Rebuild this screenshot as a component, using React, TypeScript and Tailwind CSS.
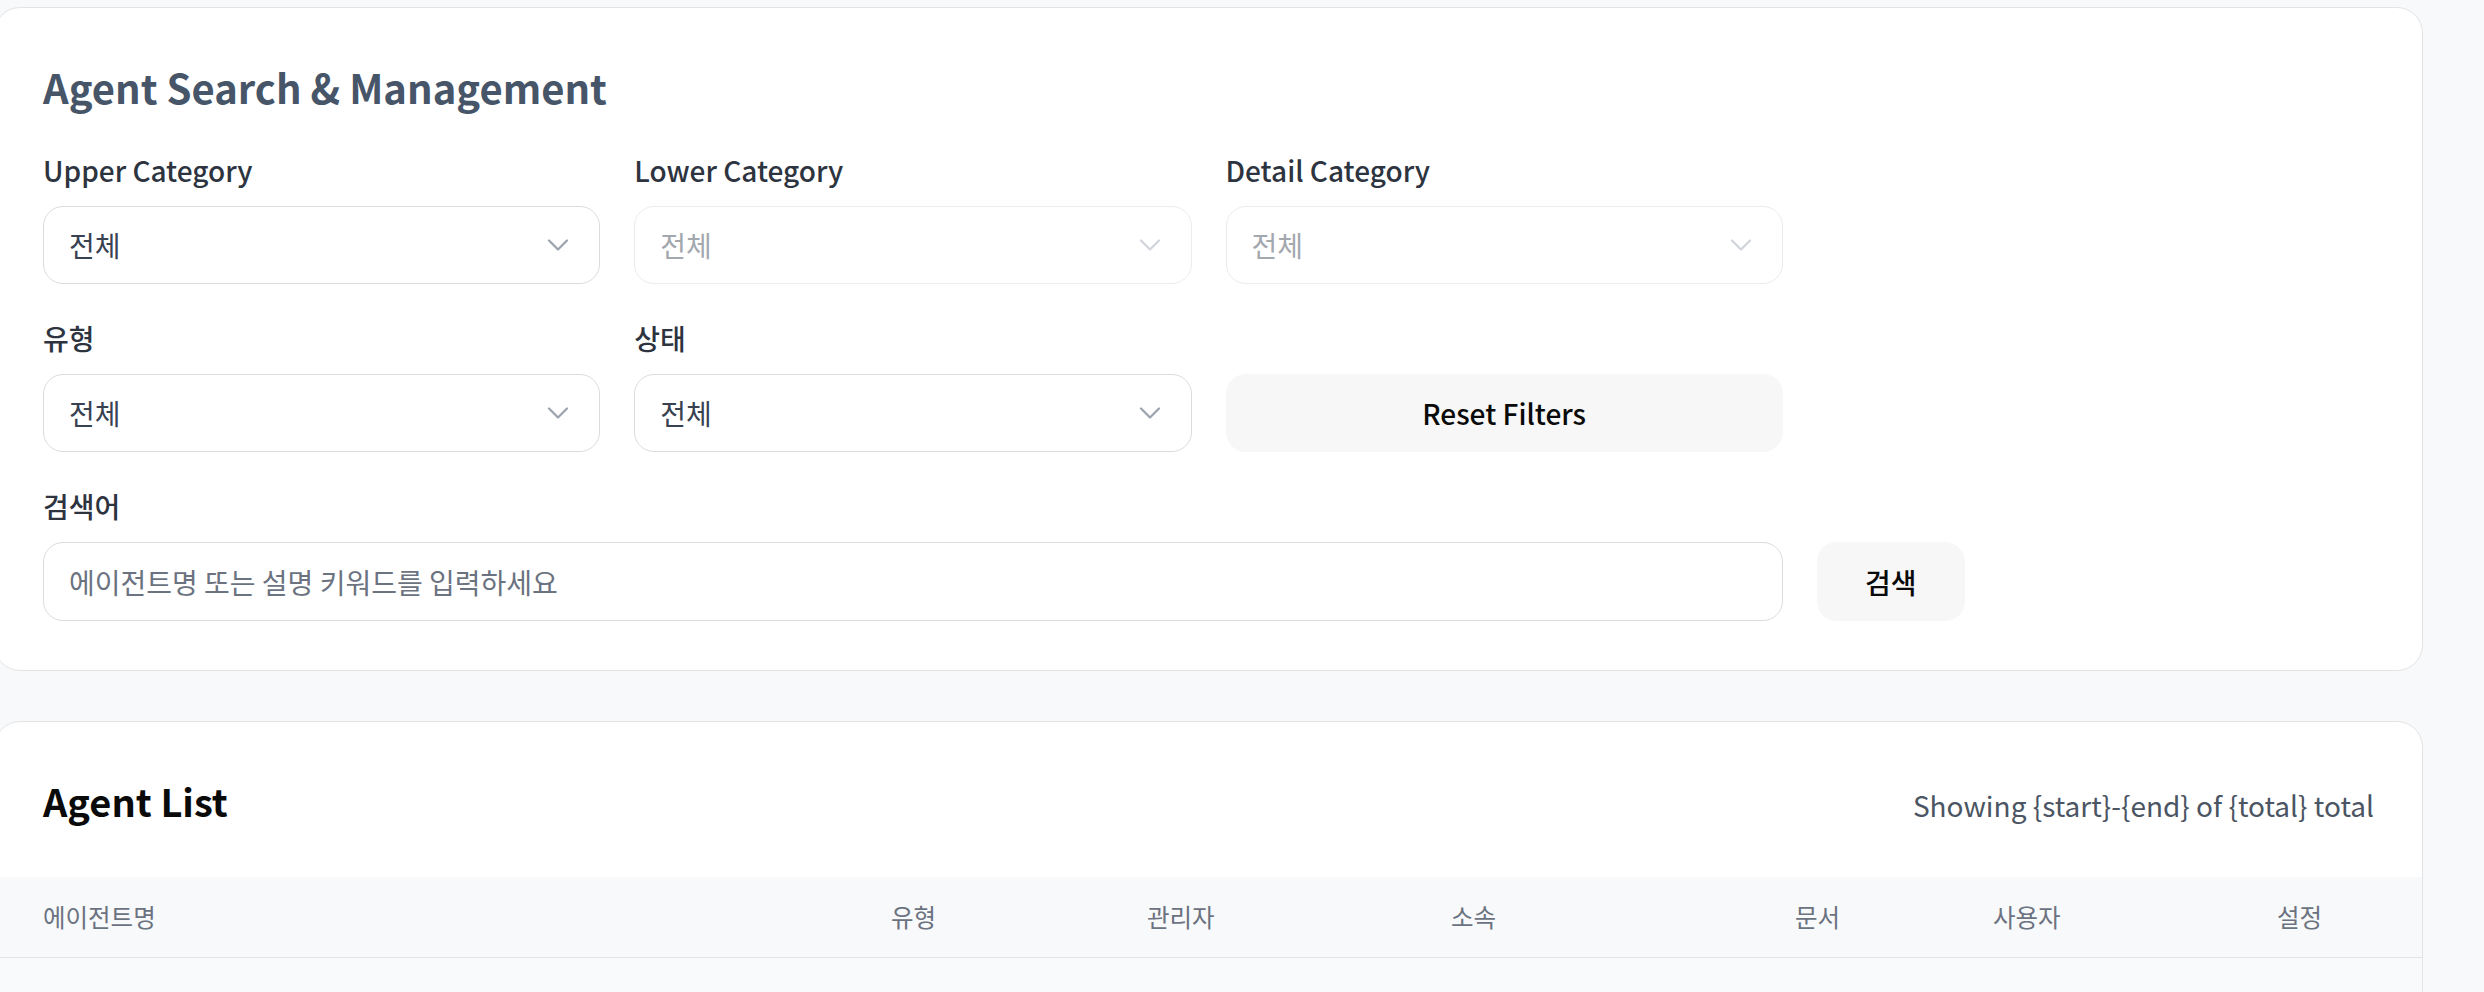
import { ChevronDown } from "lucide-react";

function SelectField({
  label,
  disabled = false,
}: {
  label: string;
  disabled?: boolean;
}) {
  return (
    <div className="flex flex-col">
      <label className="h-[42px] text-[28px] leading-[42px] font-medium text-[#2d3440] mb-[15px]">
        {label}
      </label>
      <button
        type="button"
        disabled={disabled}
        className={
          disabled
            ? "flex h-[78px] items-center justify-between rounded-[20px] border border-[#ececec] bg-white pl-[25px] pr-[23px] text-left text-[28px] text-[#a3a7ae]"
            : "flex h-[78px] items-center justify-between rounded-[20px] border border-[#dcdcdc] bg-white pl-[25px] pr-[23px] text-left text-[28px] text-[#374151]"
        }
      >
        <span>전체</span>
        <ChevronDown
          size={36}
          strokeWidth={1.5}
          className={disabled ? "text-[#d1d5db]" : "text-[#9ca3af]"}
        />
      </button>
    </div>
  );
}

export default function App() {
  return (
    <div className="min-h-screen bg-[#f8f9fa] pt-[7px] pr-[61px] font-['Noto_Sans_CJK_KR','Noto_Sans',sans-serif]">
      <div className="-ml-[6px] flex flex-col gap-[50px]">
        <section className="rounded-[26px] border border-[#e3e4e6] bg-white px-[48px] pt-[51px] pb-[49px]">
          <h2 className="mb-[34px] text-[40px] leading-[56px] font-bold text-[#475569]">
            Agent Search &amp; Management
          </h2>
          <div className="grid grid-cols-4 gap-x-[34px] gap-y-[33px]">
            <SelectField label="Upper Category" />
            <SelectField label="Lower Category" disabled />
            <SelectField label="Detail Category" disabled />
            <div />
            <SelectField label="유형" />
            <SelectField label="상태" />
            <div className="flex flex-col justify-end">
              <button
                type="button"
                className="h-[78px] rounded-[20px] bg-[#f7f7f7] text-[28px] font-medium text-[#0a0a0a]"
              >
                Reset Filters
              </button>
            </div>
            <div />
            <div className="col-span-3 flex flex-col">
              <label className="mb-[15px] h-[42px] text-[28px] leading-[42px] font-medium text-[#2d3440]">
                검색어
              </label>
              <input
                type="text"
                placeholder="에이전트명 또는 설명 키워드를 입력하세요"
                className="h-[79px] rounded-[20px] border border-[#dcdcdc] bg-white px-[25px] text-[28px] text-[#374151] outline-none placeholder:text-[#6b7280]"
              />
            </div>
            <div className="flex items-end">
              <button
                type="button"
                className="h-[79px] w-[148px] rounded-[20px] bg-[#f7f7f7] text-[28px] font-medium text-[#0a0a0a]"
              >
                검색
              </button>
            </div>
          </div>
        </section>

        <section className="overflow-hidden rounded-[26px] border border-[#e3e4e6] bg-white">
          <div className="flex items-baseline justify-between px-[48px] pt-[51px] pb-[48px]">
            <h2 className="text-[38px] leading-[56px] font-bold text-[#0a0a0a]">
              Agent List
            </h2>
            <span className="text-[28px] leading-[42px] text-[#4b5563]">
              Showing {"{start}"}-{"{end}"} of {"{total}"} total
            </span>
          </div>
          <div className="grid h-[81px] grid-cols-[896px_256px_304px_344px_198px_284px_1fr] items-center border-b border-[#e3e4e6] bg-[#f8f9fa] text-[24.5px] text-[#6b7280]">
            <div className="pl-[48px]">에이전트명</div>
            <div>유형</div>
            <div>관리자</div>
            <div>소속</div>
            <div>문서</div>
            <div>사용자</div>
            <div>설정</div>
          </div>
          <div className="h-[240px] bg-[#f9fafb]" />
        </section>
      </div>
    </div>
  );
}
